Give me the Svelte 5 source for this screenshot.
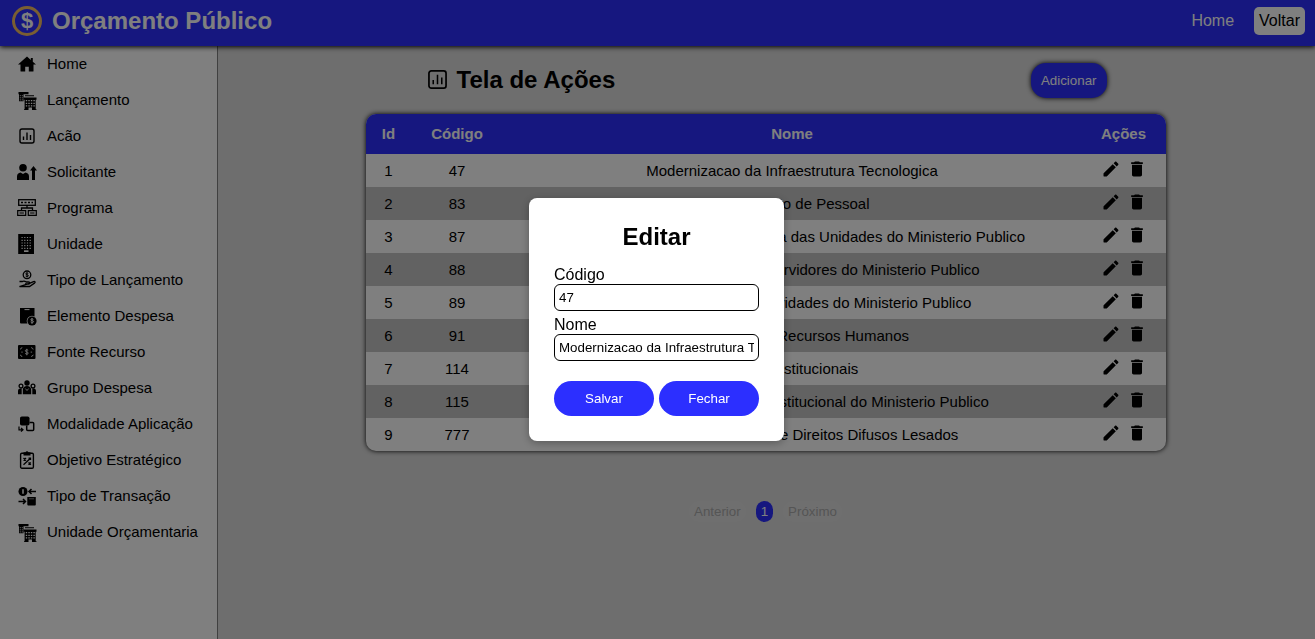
<script>
  const menu = [
    { label: 'Home', icon: 'home' },
    { label: 'Lançamento', icon: 'buildings' },
    { label: 'Acão', icon: 'chart' },
    { label: 'Solicitante', icon: 'userUp' },
    { label: 'Programa', icon: 'network' },
    { label: 'Unidade', icon: 'building' },
    { label: 'Tipo de Lançamento', icon: 'hand' },
    { label: 'Elemento Despesa', icon: 'package' },
    { label: 'Fonte Recurso', icon: 'banknote' },
    { label: 'Grupo Despesa', icon: 'group' },
    { label: 'Modalidade Aplicação', icon: 'swap' },
    { label: 'Objetivo Estratégico', icon: 'clipboard' },
    { label: 'Tipo de Transação', icon: 'transfer' },
    { label: 'Unidade Orçamentaria', icon: 'buildings' }
  ];

  const rows = [
    { id: 1, codigo: 47, nome: 'Modernizacao da Infraestrutura Tecnologica' },
    { id: 2, codigo: 83, nome: 'Pagamento de Pessoal' },
    { id: 3, codigo: 87, nome: 'Ampliacao da Infraestrutura Fisica das Unidades do Ministerio Publico' },
    { id: 4, codigo: 88, nome: 'Assistencia Medica aos Servidores do Ministerio Publico' },
    { id: 5, codigo: 89, nome: 'Desenvolvimento das Atividades do Ministerio Publico' },
    { id: 6, codigo: 91, nome: 'Valorizacao de Recursos Humanos' },
    { id: 7, codigo: 114, nome: 'Acoes Institucionais' },
    { id: 8, codigo: 115, nome: 'Modernizacao da Gestao Institucional do Ministerio Publico' },
    { id: 9, codigo: 777, nome: 'Fundo de Restituicao de Direitos Difusos Lesados' }
  ];

  let aberto = $state(true);
  let codigo = $state('47');
  let nome = $state('Modernizacao da Infraestrutura Tecnologica');

  function editar(row) {
    codigo = String(row.codigo);
    nome = row.nome;
    aberto = true;
  }
  function fechar(event) {
    event?.preventDefault();
    aberto = false;
  }
</script>

{#snippet icon(name)}
  <svg class="icon" viewBox="0 0 20 20" aria-hidden="true">
    {#if name === 'home'}
      <path d="M10 2.500 1 10.500h2.500V17q0 .6.6.6h4.100v-4.800h3.600v4.800h4.100q.6 0 .6-.6v-6.500H19L15.800 7.700V4h-2v1.900z" />
    {:else if name === 'buildings'}
      <path d="M1.500 2h10v2.200h-10zM2 4.200h4.500v7H2zM8 5.200h9v1h-9z" />
      <path d="M2.800 5.700h3.700M2.800 7.800h3.700M2.800 9.900h3.700" stroke="#fff" stroke-width=".9" stroke-dasharray="1 1" />
      <path d="M6.500 7.500h13v2.200h-.8v9.600h.8v.7H7v-.7h.6V9.700H6.500z" />
      <path d="M8.800 10.700h9M8.800 13.300h9M8.800 15.900h9" stroke="#fff" stroke-width="1.200" stroke-dasharray="1.400 1.130" />
      <path d="M11.500 17.500h3.500V20h-3.500z" fill="#fff" />
    {:else if name === 'chart'}
      <rect x="3" y="3" width="14" height="14" rx="2" fill="none" stroke="#000" stroke-width="1.400" />
      <path d="M6.500 10.500v3.500M10 6.500V14M13.500 9v5" fill="none" stroke="#000" stroke-width="1.400" />
    {:else if name === 'userUp'}
      <circle cx="6" cy="5.700" r="3.800" />
      <path d="M0 18v-3.500C0 12 1.500 10.800 3.500 10.500L6 12l2.500-1.500c2 .3 3.500 1.500 3.500 4V18zM16.500 4 20 8.500h-2V18h-3V8.500h-2z" />
    {:else if name === 'network'}
      <rect x="1.700" y="1.700" width="16.600" height="5.600" fill="none" stroke="#000" stroke-width="1.300" />
      <path d="M4 4.500h2M7.500 4.500h2M11 4.500h2M14.500 4.500h1.500M10 7v3M4.500 12.500V10h11v2.500" fill="none" stroke="#000" stroke-width="1.300" />
      <path d="M.7 12.700h8v4.600h-8zM11.300 12.700h8v4.600h-8zM2.500 15h4.400M13.100 15h4.400" fill="none" stroke="#000" stroke-width="1.200" />
    {:else if name === 'building'}
      <path d="M1.200 0h15.800v20H1.200z" />
      <path d="M4.500 3.500h9.500M4.500 6.300h9.500M4.500 9h9.500M4.500 11.700h9.500M4.500 14.300h9.500" stroke="#fff" stroke-width="1.200" stroke-dasharray="1.200 1.500" />
      <path d="M7 16.300h4.500V18H7z" fill="#fff" />
    {:else if name === 'hand'}
      <circle cx="10" cy="4.800" r="3.800" fill="none" stroke="#000" stroke-width="1.300" />
      <path d="M11.300 3.500c-1-.8-2.600-.5-2.600.4 0 1.200 2.700.6 2.700 1.800 0 1-1.700 1.200-2.800.3M10 2.200v5.200" fill="none" stroke="#000" stroke-width="1" />
      <path d="M2.500 11.500h3c1.500-1 2.500-.4 3.800.5h2.200c1.700 0 1.700 2 0 2H8M12.500 13.300l4-1.700c1.500-.5 2.200.7 1 1.500l-5 3.400H2.500z" fill="none" stroke="#000" stroke-width="1.300" />
    {:else if name === 'package'}
      <path d="M3 2h14.500v15.500H4q-1 0-1-1z" />
      <path d="M7.500 3.600h5" stroke="#fff" stroke-width="1" />
      <circle cx="15" cy="15" r="5.300" fill="#fff" />
      <circle cx="15" cy="15" r="4.600" />
      <path d="M16.400 13.400c-1-.8-2.700-.5-2.700.4 0 1.100 2.900.6 2.900 1.800 0 1-1.900 1.200-3 .3M15 12v6" fill="none" stroke="#fff" stroke-width=".9" />
    {:else if name === 'banknote'}
      <rect x="1" y="3" width="17.500" height="14" rx="1" />
      <path d="M3 7.200A2.500 2.500 0 0 0 5 5.200M14.500 5.200a2.500 2.500 0 0 0 2 2M3 13a2.500 2.500 0 0 1 2 2M14.500 15a2.500 2.500 0 0 1 2-2M11.200 8.300c-1.300-.9-2.900-.5-2.900.5 0 1.400 3 .9 3 2.300 0 1.100-2 1.400-3.200.3M9.800 6.800v6.500M4.300 10.100h1.400M13.700 10.100h1.400" fill="none" stroke="#fff" stroke-width=".8" />
    {:else if name === 'group'}
      <circle cx="10" cy="5" r="2.700" />
      <circle cx="4" cy="8" r="1.900" fill="none" stroke="#000" stroke-width="1.300" />
      <circle cx="16" cy="8" r="1.900" fill="none" stroke="#000" stroke-width="1.300" />
      <path d="M5.800 16.300V12c0-2.600 1.800-4 4.200-4s4.200 1.400 4.200 4v4.300zM1 16.300V13c0-1.800 1.500-2.800 3.700-2.600v5.900zM19 16.300V13c0-1.800-1.500-2.800-3.700-2.600v5.900z" />
      <path d="M8.300 10.500 10 12.500l1.700-2" fill="none" stroke="#fff" stroke-width=".8" />
    {:else if name === 'swap'}
      <rect x="3" y="2.500" width="9.500" height="9" rx="1.800" />
      <path d="M12.500 8.500h3.200q1 0 1 1v6q0 1-1 1h-5q-1 0-1-1v-4" fill="none" stroke="#000" stroke-width="1.500" />
      <path d="M2 12.500v3.300h3.500M4 14l2 1.800-2 1.800" fill="none" stroke="#000" stroke-width="1.200" />
    {:else if name === 'clipboard'}
      <rect x="3.600" y="3.200" width="12.800" height="15" rx="1.300" fill="none" stroke="#000" stroke-width="1.400" />
      <path d="M6.500 2.200h2a1.600 1.600 0 0 1 3 0h2v3.300h-7z" />
      <path d="m6.500 14.800 7-6.500M6.500 8l2.500 2.500M9 8l-2.500 2.500M11.500 12.500l2.300 2.300M13.800 12.500l-2.300 2.300M11.500 8.200h2V10" fill="none" stroke="#000" stroke-width="1.300" />
    {:else if name === 'transfer'}
      <circle cx="6" cy="5.500" r="4.500" />
      <path d="M6 3.200v4.600" stroke="#fff" stroke-width="1.500" />
      <path d="M12 5.500h7M14.500 2.900 12 5.500l2.500 2.600M1.500 15.500h7M6 12.900l2.500 2.600L6 18.100" fill="none" stroke="#000" stroke-width="1.500" />
      <path d="M10.300 11h8.500v7.200c0 .8-.4 1.300-1.200 1.300h-6c-.8 0-1.300-.5-1.300-1.300z" />
      <path d="M12 12.800h5" stroke="#888" stroke-width=".9" />
    {/if}
  </svg>
{/snippet}

<div class="app">
  <header class="topbar">
    <div class="brand">
      <span class="coin" aria-hidden="true">$</span>
      <h1>Orçamento Público</h1>
    </div>
    <nav class="links">
      <a href="#home">Home</a>
      <a class="back" href="#voltar">Voltar</a>
    </nav>
  </header>

  <div class="body">
    <nav class="sidebar">
      {#each menu as item}
        <a href="#menu">{@render icon(item.icon)}<span>{item.label}</span></a>
      {/each}
    </nav>

    <main>
      <div class="panel">
        <div class="toolbar">
          <h2>
            <svg class="title-icon" viewBox="0 0 20 20" aria-hidden="true">
              <rect x="1" y="1" width="18" height="18" rx="2.500" fill="none" stroke="#000" stroke-width="1.800" />
              <path d="M5.500 10.500V15M10 5v10M14.500 8v7" fill="none" stroke="#000" stroke-width="1.600" />
            </svg>
            Tela de Ações
          </h2>
          <button class="add" type="button">Adicionar</button>
        </div>

        <table>
          <colgroup><col class="c-id" /><col class="c-code" /><col /><col class="c-actions" /></colgroup>
          <thead>
            <tr><th>Id</th><th>Código</th><th>Nome</th><th>Ações</th></tr>
          </thead>
          <tbody>
            {#each rows as row (row.id)}
              <tr>
                <td>{row.id}</td>
                <td>{row.codigo}</td>
                <td>{row.nome}</td>
                <td>
                  <div class="actions">
                    <button type="button" aria-label="Editar" onclick={() => editar(row)}>
                      <svg viewBox="0 0 24 24"><path d="M3 17.460v3.040c0 .28.22.5.5.5h3.040c.13 0 .26-.05.35-.15L17.810 9.940l-3.750-3.750L3.150 17.100c-.1.1-.15.22-.15.36zM20.710 7.040c.39-.39.39-1.020 0-1.410l-2.340-2.340c-.39-.39-1.020-.39-1.410 0l-1.830 1.830 3.750 3.750 1.830-1.830z" /></svg>
                    </button>
                    <button type="button" aria-label="Excluir">
                      <svg viewBox="0 0 24 24"><path d="M6 19c0 1.100.9 2 2 2h8c1.100 0 2-.9 2-2V7H6v12zM19 4h-3.500l-1-1h-5l-1 1H5v2h14V4z" /></svg>
                    </button>
                  </div>
                </td>
              </tr>
            {/each}
          </tbody>
        </table>

        <div class="pager">
          <button type="button" disabled>Anterior</button>
          <button type="button" class="current">1</button>
          <button type="button" disabled>Próximo</button>
        </div>
      </div>
    </main>
  </div>
</div>

{#if aberto}
  <div class="overlay">
    <form class="modal" onsubmit={fechar}>
      <h2>Editar</h2>
      <div class="field">
        <label for="codigo">Código</label>
        <input id="codigo" type="text" bind:value={codigo} />
      </div>
      <div class="field">
        <label for="nome">Nome</label>
        <input id="nome" type="text" bind:value={nome} />
      </div>
      <div class="buttons">
        <button type="submit">Salvar</button>
        <button type="button" onclick={fechar}>Fechar</button>
      </div>
    </form>
  </div>
{/if}

<style>
  :global(body) {
    font-family: "Liberation Sans", Arial, sans-serif;
    font-size: 16px;
    color: #000;
  }
  h1, h2 { margin: 0; font-size: 24px; line-height: 28px; }
  button, input { font-family: inherit; box-sizing: border-box; }
  button { border: 0; cursor: pointer; }
  a { color: inherit; text-decoration: none; }

  .app { min-height: 100vh; display: flex; flex-direction: column; background: #dcdcdc; }

  .topbar {
    display: flex;
    justify-content: space-between;
    align-items: center;
    padding: 6px 10px 10px 12px;
    background: #2c2fff;
    color: #fff;
    box-shadow: 0 1px 5px #000;
    position: relative;
    z-index: 1;
  }
  .brand { display: flex; align-items: center; gap: 10px; }
  .coin {
    box-sizing: border-box;
    width: 30px;
    height: 30px;
    border: 3px solid #f4bc64;
    border-radius: 50%;
    font-size: 22px;
    font-weight: bold;
    line-height: 24px;
    text-align: center;
  }
  .links { display: flex; align-items: center; gap: 20px; line-height: 18px; }
  .back { padding: 5px; border-radius: 5px; background: #fff; color: #000; }

  .body { flex: 1; display: flex; }
  .sidebar {
    flex: none;
    width: 217px;
    background: #fff;
    border-right: 1px solid #808080;
    font-size: 15px;
    line-height: 18px;
  }
  .sidebar a { display: flex; align-items: center; gap: 10px; height: 36px; padding-left: 17px; }
  .icon { width: 20px; height: 20px; flex: none; }

  main { flex: 1; display: flex; justify-content: center; align-items: flex-start; padding: 17px 22px 17px 20px; }
  .panel { width: 100%; max-width: 800px; }
  .toolbar { display: flex; justify-content: space-between; align-items: center; padding: 0 59px 16px 62px; }
  .toolbar h2 { display: flex; align-items: center; gap: 10px; padding-bottom: 2px; }
  .title-icon { width: 19px; height: 19px; }
  .add {
    height: 35px;
    padding: 0 10px;
    border-radius: 15px;
    background: #2c2fff;
    color: #fff;
    box-shadow: 0 0 5px #000;
  }

  table {
    width: 100%;
    table-layout: fixed;
    border-collapse: collapse;
    border-radius: 10px;
    overflow: hidden;
    box-shadow: 0 0 5px #000;
    background: #fff;
    font-size: 15px;
    text-align: center;
  }
  .c-id { width: 46px; }
  .c-code { width: 91px; }
  .c-actions { width: 84px; }
  th { box-sizing: border-box; height: 40px; padding: 0 0 2px; background: #2c2fff; color: #fff; }
  td { height: 33px; padding: 0; }
  tbody tr:nth-child(even) { background: #c5c5c5; }
  .actions { display: flex; justify-content: center; gap: 6px; padding-bottom: 3px; }
  .actions button { padding: 0; background: none; display: flex; }
  .actions svg { width: 20px; height: 20px; }

  .pager { display: flex; justify-content: center; gap: 10px; padding-top: 50px; }
  .pager button { height: 21px; padding: 0 5px; border-radius: 10px; background: #dfdfdf; color: #aaa; }
  .pager .current { background: #2c2fff; color: #fff; }

  .overlay {
    position: fixed;
    inset: 0;
    z-index: 2;
    display: flex;
    align-items: center;
    justify-content: center;
    padding-right: 2px;
    background: rgba(0, 0, 0, 0.5);
  }
  .modal {
    box-sizing: border-box;
    width: 255px;
    padding: 25px;
    border-radius: 8px;
    background: #fff;
    box-shadow: 0 2px 8px rgba(0, 0, 0, 0.3);
  }
  .modal h2 { margin-bottom: 14px; text-align: center; }
  .field { display: flex; flex-direction: column; margin-bottom: 4px; line-height: 19px; }
  .field input { width: 100%; height: 27px; padding: 0 4px; border: 1px solid #000; border-radius: 6px; background: #fff; color: #000; }
  .buttons { display: flex; gap: 5px; padding-top: 16px; }
  .buttons button { flex: 1; height: 35px; border-radius: 18px; background: #2c2fff; color: #fff; }
</style>
